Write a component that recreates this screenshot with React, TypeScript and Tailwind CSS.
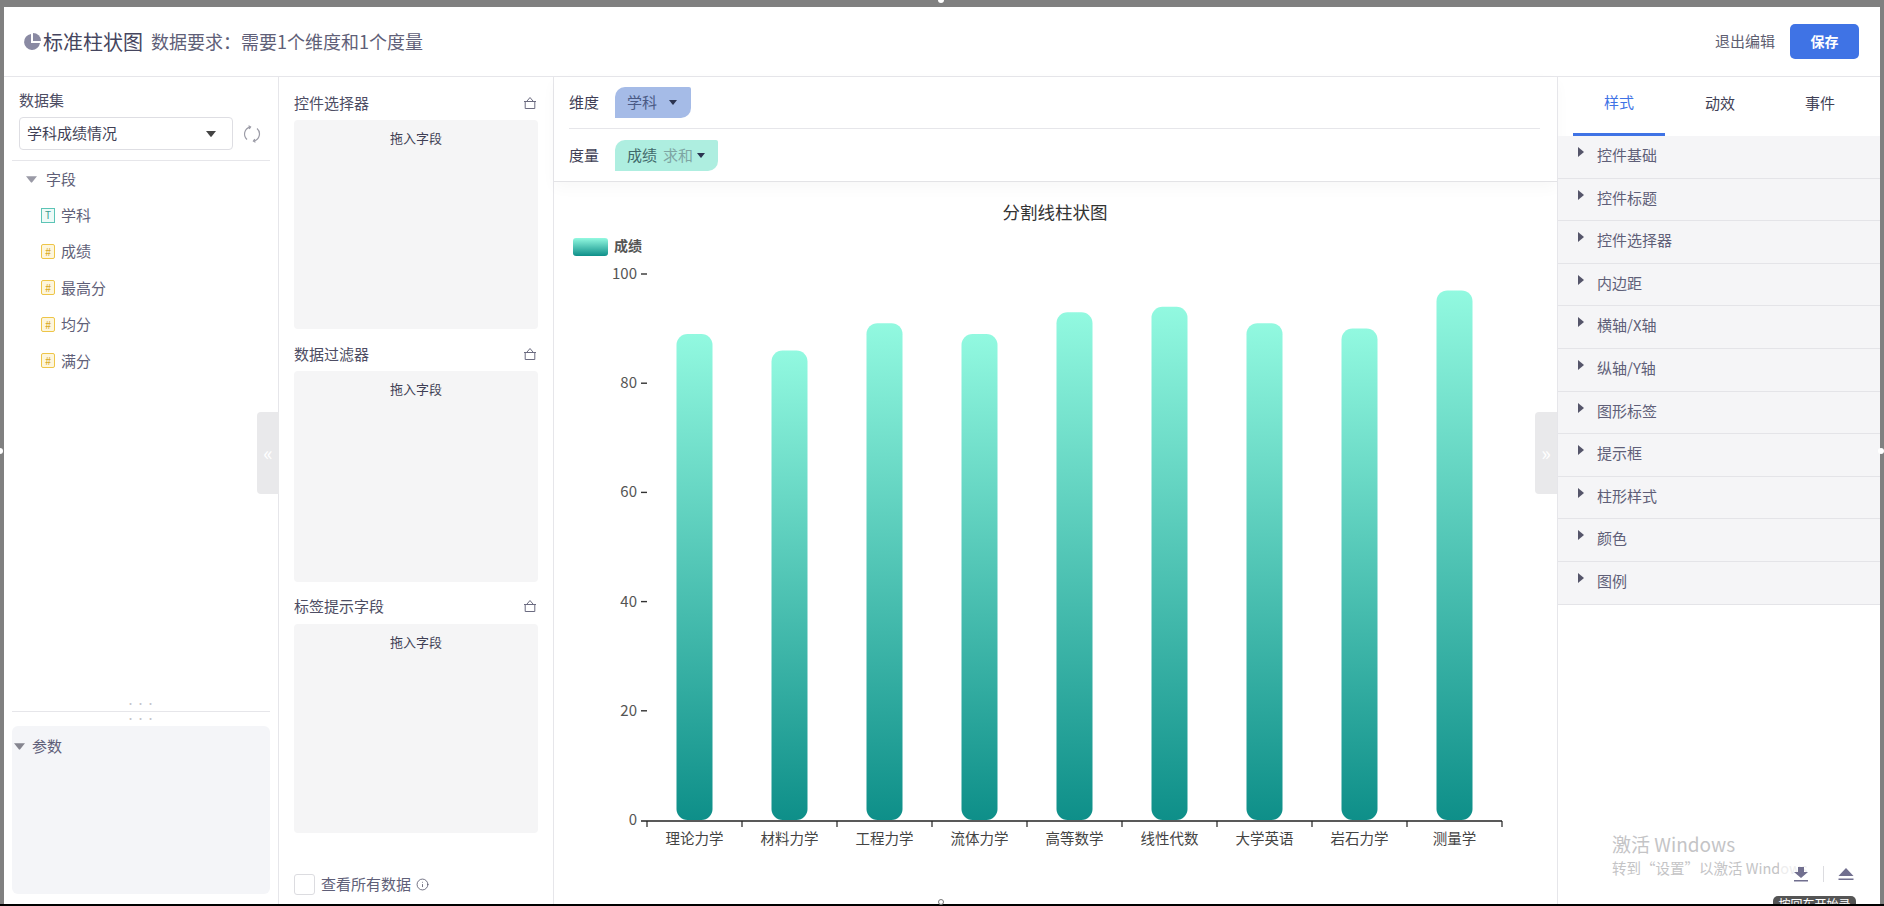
import { Info } from "lucide-react";

const fields = [
  { name: "学科", kind: "text" },
  { name: "成绩", kind: "num" },
  { name: "最高分", kind: "num" },
  { name: "均分", kind: "num" },
  { name: "满分", kind: "num" },
];

const sections = ["控件基础", "控件标题", "控件选择器", "内边距", "横轴/X轴", "纵轴/Y轴", "图形标签", "提示框", "柱形样式", "颜色", "图例"];

const bars = [
  { name: "理论力学", value: 89 },
  { name: "材料力学", value: 86 },
  { name: "工程力学", value: 91 },
  { name: "流体力学", value: 89 },
  { name: "高等数学", value: 93 },
  { name: "线性代数", value: 94 },
  { name: "大学英语", value: 91 },
  { name: "岩石力学", value: 90 },
  { name: "测量学", value: 97 },
];

function CaretDown({ className }: { className: string }) {
  return (
    <svg viewBox="0 0 10 6" className={className} fill="currentColor">
      <path d="M0 0h10L5.6 5.6a.8.8 0 0 1-1.2 0z" />
    </svg>
  );
}

function PieIcon() {
  return (
    <svg viewBox="0 0 18 18" className="w-[18px] h-[18px] text-[#8a8aa3]" fill="currentColor">
      <path d="M8 1a8 8 0 1 0 9 9H8z" />
      <path d="M10 0a8 8 0 0 1 8 8h-8z" />
    </svg>
  );
}

function BasketIcon() {
  return (
    <svg viewBox="0 0 14 14" className="w-[14px] h-[14px] text-[#6b6b80]" fill="none" stroke="currentColor" strokeWidth="1">
      <path d="M1 5.5h12M2.2 5.5v7h9.6v-7M3.6 5.5 7 1.5l3.4 4" />
    </svg>
  );
}

function RefreshIcon() {
  return (
    <svg viewBox="0 0 18 18" className="w-[18px] h-[18px] text-[#9b9ba6]" fill="none" stroke="currentColor" strokeWidth="1.2">
      <path d="M4 14.5A7.2 7.2 0 0 1 7 2.1" />
      <path d="M14 3.5a7.2 7.2 0 0 1-3 12.4" />
      <path d="M5.5 0.8 7.6 2 6.2 4M12.5 17.2 10.4 16l1.4-2" />
    </svg>
  );
}

function FieldIcon({ kind }: { kind: string }) {
  if (kind === "text") {
    return (
      <div className="w-[14px] h-[15px] border border-[#5cc4b6] bg-[#eefaf7] flex items-center justify-center text-[10px] leading-none text-[#3c9c90]">
        T
      </div>
    );
  }
  return (
    <div className="w-[14px] h-[15px] border border-[#eec548] bg-[#fdf6dd] rounded-[2px] flex items-center justify-center text-[11px] leading-none text-[#d9a925]">
      #
    </div>
  );
}

function DropBox({ title, boxClass }: { title: string; boxClass: string }) {
  return (
    <div>
      <div className="flex items-center justify-between h-[20px] pr-[1px] text-[15px] text-[#4d4d63]">
        <span>{title}</span>
        <BasketIcon />
      </div>
      <div className={`bg-[#f5f5f6] rounded-[4px] text-center text-[13px] leading-[18px] pt-[9px] text-[#3f3f55] ${boxClass}`}>
        拖入字段
      </div>
    </div>
  );
}

function Chart() {
  const baseY = 820;
  const unit = 5.46;
  const startX = 647;
  const step = 95;
  return (
    <svg viewBox="554 182 1003 722" className="w-full h-full block">
      <defs>
        <linearGradient id="barFill" x1="0" y1="0" x2="0" y2="1">
          <stop offset="0" stopColor="#92f9e0" />
          <stop offset="1" stopColor="#0e8f89" />
        </linearGradient>
      </defs>
      <text x="1055" y="219" textAnchor="middle" fontSize="17.5" fill="#333">
        分割线柱状图
      </text>
      <rect x="573" y="238" width="35" height="18" rx="3" fill="url(#barFill)" />
      <text x="614" y="251" fontSize="14" fontWeight="700" fill="#555">
        成绩
      </text>
      {[0, 20, 40, 60, 80, 100].map((v) => {
        const y = baseY - v * unit;
        return (
          <g key={v}>
            <text x="637" y={y + 5} textAnchor="end" fontSize="15" fill="#555">
              {v}
            </text>
            {v > 0 && <line x1="641" x2="647" y1={y} y2={y} stroke="#333" strokeWidth="1.4" />}
          </g>
        );
      })}
      <line x1="641" x2="1502" y1={baseY + 1} y2={baseY + 1} stroke="#222" strokeWidth="1.4" />
      {Array.from({ length: 10 }, (_, i) => (
        <line key={i} x1={startX + i * step} x2={startX + i * step} y1={baseY + 1} y2={baseY + 7} stroke="#222" strokeWidth="1.2" />
      ))}
      {bars.map((b, i) => {
        const cx = startX + step * i + 47.5;
        const top = baseY - b.value * unit;
        const h = baseY - top;
        return (
          <g key={b.name}>
            <rect x={cx - 18} y={top} width="36" height={h} rx="11" fill="url(#barFill)" />
            <text x={cx} y={844} textAnchor="middle" fontSize="14.5" fill="#444">
              {b.name}
            </text>
          </g>
        );
      })}
    </svg>
  );
}

export default function App() {
  return (
    <div className="relative w-[1884px] h-[906px] overflow-hidden flex flex-col bg-[#808080] font-['Noto_Sans_CJK_SC','Noto_Sans',sans-serif]">
      <div className="h-[7px] shrink-0" />
      <div className="flex-1 min-h-0 flex pl-[4px] pr-[4px]">
        <div className="relative flex-1 min-w-0 bg-white flex flex-col">
          {/* top bar */}
          <header className="h-[70px] shrink-0 border-b border-[#e6e6ea] flex items-center pl-[19px] pr-[21px]">
            <PieIcon />
            <span className="ml-[2px] text-[20px] text-[#45455e]">标准柱状图</span>
            <span className="ml-[8px] text-[18px] text-[#5f5f78]">数据要求：需要1个维度和1个度量</span>
            <span className="ml-auto text-[15px] text-[#5d5d70]">退出编辑</span>
            <button className="ml-[15px] w-[69px] h-[35px] rounded-[5px] bg-[#3f73e5] text-white text-[14px] font-bold">保存</button>
          </header>

          <div className="flex-1 min-h-0 flex">
            {/* dataset column */}
            <aside className="relative w-[275px] shrink-0 border-r border-[#e6e6ea] flex flex-col">
              <div className="flex-1 min-h-0 px-[8px]">
                <div className="pl-[7px] pt-[12px] text-[15px] leading-[22px] text-[#4d4d63]">数据集</div>
                <div className="pl-[7px] mt-[6px] flex items-center">
                  <div className="w-[214px] h-[33px] border border-[#dedee3] rounded-[4px] flex items-center justify-between pl-[7px] pr-[16px] text-[15px] text-[#3f3f55]">
                    <span>学科成绩情况</span>
                    <CaretDown className="w-[10px] h-[6px] text-[#444]" />
                  </div>
                  <div className="ml-[10px]"><RefreshIcon /></div>
                </div>
                <div className="mt-[10px] border-t border-[#e6e6ea]">
                  <div className="flex items-center h-[36px] pl-[14px] text-[15px] text-[#5f5f78]">
                    <CaretDown className="w-[11px] h-[7px] text-[#9a9aa6]" />
                    <span className="ml-[9px]">字段</span>
                  </div>
                  {fields.map((f) => (
                    <div key={f.name} className="flex items-center h-[36.4px] pl-[29px] text-[15px] text-[#5f5f78]">
                      <FieldIcon kind={f.kind} />
                      <span className="ml-[6px]">{f.name}</span>
                    </div>
                  ))}
                </div>
              </div>
              <div className="text-center text-[9px] leading-[8px] tracking-[1px] text-[#c4c4c8] h-[8px]">···</div>
              <div className="mx-[8px] mt-[3px] border-t border-[#e6e6ea]" />
              <div className="text-center text-[9px] leading-[8px] tracking-[1px] text-[#c4c4c8] h-[8px] mt-[3px]">···</div>
              <div className="mx-[8px] mt-[3px] mb-[10px] h-[168px] rounded-[6px] bg-[#f4f5f8]">
                <div className="flex items-center h-[40px] pl-[2px] text-[15px] text-[#5f5f78]">
                  <CaretDown className="w-[11px] h-[7px] text-[#85858f]" />
                  <span className="ml-[7px]">参数</span>
                </div>
              </div>
              <div className="absolute top-[335px] -right-px w-[22px] h-[82px] rounded-l-[4px] bg-[#e9e9eb] flex items-center justify-center text-[20px] text-white">«</div>
            </aside>

            {/* drop zones */}
            <section className="w-[275px] shrink-0 border-r border-[#e6e6ea] px-[15px] pt-[16px] flex flex-col">
              <DropBox title="控件选择器" boxClass="mt-[7px] h-[209px]" />
              <div className="mt-[15px]"><DropBox title="数据过滤器" boxClass="mt-[7px] h-[211px]" /></div>
              <div className="mt-[14px]"><DropBox title="标签提示字段" boxClass="mt-[8px] h-[209px]" /></div>
              <div className="mt-[40px] flex items-center text-[15px] text-[#5f5f78]">
                <div className="w-[21px] h-[21px] rounded-[3px] border border-[#dcdce0]" />
                <span className="ml-[6px]">查看所有数据</span>
                <Info className="ml-[5px] w-[13px] h-[13px] text-[#55556a]" strokeWidth={1.5} />
              </div>
            </section>

            {/* chart */}
            <main className="flex-1 min-w-0 flex flex-col">
              <div className="h-[105px] shrink-0 border-b border-[#e3e3e6] pl-[15px] pr-[17px] shadow-[0_6px_14px_rgba(0,0,0,0.03)]">
                <div className="h-[52px] border-b border-[#e6e6ea] flex items-center">
                  <span className="w-[46px] text-[15px] text-[#3f3f55]">维度</span>
                  <div className="w-[76px] h-[31px] rounded-tl-[10px] rounded-br-[10px] rounded-tr-[2px] bg-[#a5bbe7] flex items-center pl-[12px] text-[15px] text-[#4a5a85]">
                    <span>学科</span>
                    <CaretDown className="ml-[12px] w-[8px] h-[5px] text-[#2b3350]" />
                  </div>
                </div>
                <div className="h-[52px] flex items-center">
                  <span className="w-[46px] text-[15px] text-[#3f3f55]">度量</span>
                  <div className="w-[103px] h-[31px] rounded-tl-[10px] rounded-br-[10px] rounded-tr-[2px] bg-[#aeeee0] flex items-center pl-[12px] text-[15px] text-[#40686a]">
                    <span>成绩</span>
                    <span className="ml-[6px] text-[#7ea5a3]">求和</span>
                    <CaretDown className="ml-[4px] w-[8px] h-[5px] text-[#2b3350]" />
                  </div>
                </div>
              </div>
              <div className="flex-1 min-h-0">
                <Chart />
              </div>
            </main>

            {/* settings */}
            <aside className="relative w-[323px] shrink-0 border-l border-[#e6e6ea]">
              <div className="h-[59px] flex text-[15px] text-[#3f3f55]">
                <div className="w-[122px] pl-[15px]">
                  <div className="h-[59px] w-[92px] border-b-[3px] border-[#3f73e5] text-[#3f73e5] flex items-center justify-center pb-[6px]">样式</div>
                </div>
                <div className="w-[80px] flex items-center justify-center pb-[6px]">动效</div>
                <div className="flex-1 flex items-center justify-center pb-[6px]">事件</div>
              </div>
              {sections.map((s) => (
                <div key={s} className="h-[42.6px] bg-[#f5f5f7] border-b border-[#e4e4e8] flex pt-[8px] pl-[20px] text-[15px] leading-[22px] text-[#5f5f78]">
                  <svg viewBox="0 0 6 10" className="w-[6px] h-[10px] mt-[3px] text-[#55556a]" fill="currentColor">
                    <path d="M0 0l6 5-6 5z" />
                  </svg>
                  <span className="ml-[13px]">{s}</span>
                </div>
              ))}
              <div className="absolute top-[335px] -left-[23px] w-[22px] h-[82px] rounded-l-[4px] bg-[#e9e9eb] flex items-center justify-center text-[20px] text-white">»</div>
            </aside>
          </div>

          {/* desktop overlay bits */}
          <div className="absolute left-[1608px] top-[824px] text-[#c4c4c6] pointer-events-none">
            <div className="text-[19px] leading-[26px]">激活 Windows</div>
            <div className="text-[14.5px] leading-[22px] whitespace-nowrap">转到“设置”以激活 Windows</div>
          </div>
          <div className="absolute left-[1775px] top-[846px] w-[88px] h-[42px] bg-white/70 flex items-center justify-center">
            <svg viewBox="0 0 16 16" className="w-[16px] h-[16px] text-[#716f8f]" fill="currentColor">
              <path d="M5 1h6v5h4l-7 6-7-6h4zM1 14h14v1.6H1z" />
            </svg>
            <div className="mx-[14px] w-px h-[16px] bg-[#dcdce0]" />
            <svg viewBox="0 0 16 16" className="w-[16px] h-[16px] text-[#716f8f]" fill="currentColor">
              <path d="M8 2l7.5 8H.5zM.5 12.500h15v1.600H.5z" />
            </svg>
          </div>
          <div className="absolute left-[1769px] top-[889px] w-[83px] h-[8px] rounded-t-[5px] overflow-hidden bg-[#555] text-white text-[12px] leading-[15px] text-center">按回车开始录制</div>
        </div>
      </div>
      <div className="h-[2px] shrink-0 bg-black" />
      <div className="absolute left-[938px] -top-[3px] w-[6px] h-[6px] rounded-full bg-white" />
      <div className="absolute left-[938px] top-[899px] w-[6px] h-[6px] rounded-full border border-[#777] bg-white" />
      <div className="absolute -left-[3px] top-[448px] w-[6px] h-[6px] rounded-full bg-white" />
      <div className="absolute left-[1878px] top-[448px] w-[6px] h-[6px] rounded-full bg-white" />
    </div>
  );
}
